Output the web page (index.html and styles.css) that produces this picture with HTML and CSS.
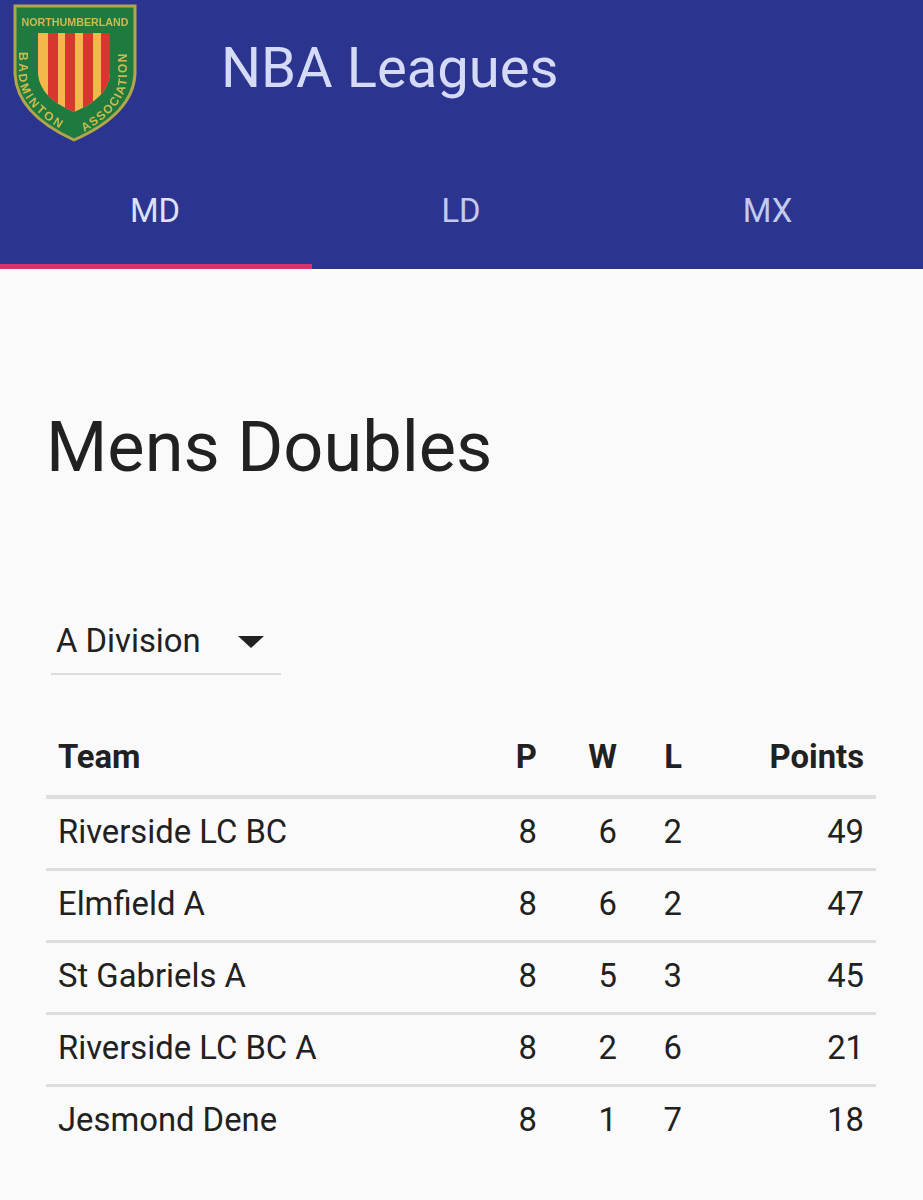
FILE: index.html
```html
<!DOCTYPE html>
<html lang="en">
<head>
<meta charset="utf-8">
<title>NBA Leagues</title>
<link rel="stylesheet" href="styles.css">
</head>
<body>
<header class="app-header">
  <div class="toolbar">
    <svg class="logo" viewBox="0 0 150 150" aria-hidden="true">
      <defs>
        <clipPath id="inner"><path d="M38 33H110V74Q108 98 74 112Q40 98 38 74Z"/></clipPath>
        <path id="curve-l" d="M19 52V78Q22 108 66 132"/>
        <path id="curve-r" d="M84 132Q126 108 127 78V44"/>
      </defs>
      <path d="M15 6H135V74Q133 114 74 140Q17 114 15 74Z" fill="#1f7a40" stroke="#b3a54a" stroke-width="3"/>
      <text class="logo-top" x="75" y="26" text-anchor="middle" textLength="107" lengthAdjust="spacingAndGlyphs">NORTHUMBERLAND</text>
      <g clip-path="url(#inner)">
        <rect x="38" y="33" width="72" height="80" fill="#f2b94a"/>
        <rect x="48" y="33" width="10" height="80" fill="#d8372f"/>
        <rect x="65" y="33" width="10" height="80" fill="#d8372f"/>
        <rect x="83" y="33" width="10" height="80" fill="#d8372f"/>
        <rect x="101" y="33" width="9" height="80" fill="#d8372f"/>
      </g>
      <text class="logo-arc"><textPath href="#curve-l">BADMINTON</textPath></text>
      <text class="logo-arc logo-arc-tight"><textPath href="#curve-r">ASSOCIATION</textPath></text>
    </svg>
    <h1 class="app-title">NBA Leagues</h1>
  </div>
  <nav class="tabs">
    <a class="tab tab-active">MD</a>
    <a class="tab">LD</a>
    <a class="tab">MX</a>
  </nav>
</header>
<main class="content">
  <h2 class="page-title">Mens Doubles</h2>
  <div class="select">
    <span class="select-value">A Division</span>
    <span class="select-arrow"></span>
  </div>
  <table class="standings">
    <colgroup>
      <col class="col-team"><col class="col-p"><col class="col-w"><col class="col-l"><col class="col-points">
    </colgroup>
    <thead>
      <tr><th class="text-cell">Team</th><th>P</th><th>W</th><th>L</th><th>Points</th></tr>
    </thead>
    <tbody>
      <tr><td class="text-cell">Riverside LC BC</td><td>8</td><td>6</td><td>2</td><td>49</td></tr>
      <tr><td class="text-cell">Elmfield A</td><td>8</td><td>6</td><td>2</td><td>47</td></tr>
      <tr><td class="text-cell">St Gabriels A</td><td>8</td><td>5</td><td>3</td><td>45</td></tr>
      <tr><td class="text-cell">Riverside LC BC A</td><td>8</td><td>2</td><td>6</td><td>21</td></tr>
      <tr><td class="text-cell">Jesmond Dene</td><td>8</td><td>1</td><td>7</td><td>18</td></tr>
    </tbody>
  </table>
</main>
</body>
</html>
```
FILE: styles.css
```css
* { box-sizing: border-box; }
html, body { margin: 0; height: 100%; }
body {
  background: #fafafa;
  color: #212121;
  font-family: Roboto, "Liberation Sans", sans-serif;
  overflow: hidden;
}
.app-header { background: #2b3590; height: 269px; display: flex; flex-direction: column; }
.toolbar { height: 150px; display: flex; align-items: flex-start; }
.logo { width: 150px; height: 150px; flex: none; filter: blur(0.5px); }
.logo-top { font: 700 11px "Liberation Sans", sans-serif; fill: #cdbb4e; }
.logo-arc { font: 700 12px "Liberation Sans", sans-serif; fill: #cdbb4e; letter-spacing: 2.5px; }
.logo-arc-tight { letter-spacing: 1.4px; }
.app-title {
  margin: 36px 0 0 71px;
  font-size: 56.2px;
  line-height: 64px;
  font-weight: 400;
  color: #d5dbf6;
}
.tabs { flex: 1; display: grid; grid-template-columns: 310px 302px 311px; }
.tab {
  position: relative;
  display: flex;
  align-items: flex-start;
  justify-content: center;
  padding-top: 42px;
  font-size: 32.8px;
  line-height: 38px;
  color: #c3caee;
}
.tab-active { color: #dde2f8; }
.tab-active::after {
  content: "";
  position: absolute;
  left: 0;
  bottom: 0;
  width: 312px;
  height: 5px;
  background: #d8336a;
}
.content { padding: 0 47px 0 46px; }
.page-title {
  margin: 134px 0 0;
  font-size: 70.3px;
  line-height: 88px;
  font-weight: 400;
}
.select {
  margin: 131px 0 0 5px;
  width: 230px;
  height: 53px;
  border-bottom: 2px solid #dcdcdc;
  display: flex;
  align-items: flex-start;
  padding-left: 5px;
}
.select-value { font-size: 32.8px; line-height: 38px; }
.select-arrow {
  margin: 14px 0 0 37px;
  border-style: solid;
  border-width: 12px 13px 0;
  border-color: #212121 transparent transparent;
}
.standings {
  margin-top: 45px;
  width: 830px;
  border-collapse: collapse;
  table-layout: fixed;
  font-size: 32.8px;
}
.col-team { width: 423px; }
.col-p { width: 80px; }
.col-w { width: 80px; }
.col-l { width: 65px; }
.col-points { width: 182px; }
.standings th, .standings td { padding: 0 12px 4px 0; text-align: right; }
.standings th { height: 77px; padding-bottom: 2px; font-weight: 700; border-bottom: 4px solid #dedede; }
.standings td { height: 72px; padding-bottom: 3px; font-weight: 400; border-bottom: 3px solid #dedede; }
.standings tr:last-child td { border-bottom: 0; }
.standings .text-cell { text-align: left; padding-left: 12px; }
```
